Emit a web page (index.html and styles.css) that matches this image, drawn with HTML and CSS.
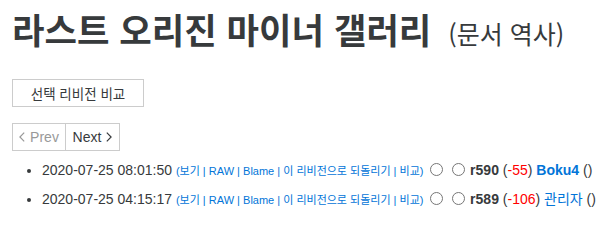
FILE: index.html
```html
<!DOCTYPE html>
<html lang="ko">
<head>
<meta charset="utf-8">
<title>라스트 오리진 마이너 갤러리 (문서 역사)</title>
<link rel="stylesheet" href="styles.css">
</head>
<body>
<div class="page">
  <h1 class="title">라스트 오리진 마이너 갤러리 <small class="sub">(문서 역사)</small></h1>
  <div class="actions">
    <button class="btn" type="button">선택 리비전 비교</button>
  </div>
  <div class="pager">
    <span class="pg disabled"><svg class="chev" width="6" height="10" viewBox="0 0 6 10"><polyline points="5.2,0.6 0.9,5 5.2,9.4" fill="none" stroke="currentColor" stroke-width="1.2"/></svg>Prev</span><a class="pg" href="#">Next<svg class="chev" width="6" height="10" viewBox="0 0 6 10"><polyline points="0.8,0.6 5.1,5 0.8,9.4" fill="none" stroke="currentColor" stroke-width="1.2"/></svg></a>
  </div>
  <ul class="history">
    <li>
      <span class="date">2020-07-25 08:01:50</span>
      <span class="tools">(<a href="#">보기</a> | <a href="#">RAW</a> | <a href="#">Blame</a> | <a href="#">이 리비전으로 되돌리기</a> | <a href="#">비교</a>)</span>
      <input class="radio" type="radio" name="oldrev">
      <input class="radio" type="radio" name="rev">
      <strong class="rev">r590</strong>
      <span class="diff">(<span class="neg">-55</span>)</span>
      <a class="user member" href="#">Boku4</a>
      <span class="note">()</span>
    </li>
    <li>
      <span class="date">2020-07-25 04:15:17</span>
      <span class="tools">(<a href="#">보기</a> | <a href="#">RAW</a> | <a href="#">Blame</a> | <a href="#">이 리비전으로 되돌리기</a> | <a href="#">비교</a>)</span>
      <input class="radio" type="radio" name="oldrev2">
      <input class="radio" type="radio" name="rev2">
      <strong class="rev">r589</strong>
      <span class="diff">(<span class="neg">-106</span>)</span>
      <a class="user" href="#">관리자</a>
      <span class="note">()</span>
    </li>
  </ul>
</div>
</body>
</html>
```

FILE: styles.css
```css
html, body {
  margin: 0;
  padding: 0;
  background: #fff;
}
body {
  font-family: "Liberation Sans", "Noto Sans CJK KR", sans-serif;
  font-size: 14px;
  color: #373a3c;
}
.page {
  padding: 0 12px;
}
.title {
  margin: 0;
  padding-top: 8px;
  height: 42px;
  font-family: "Noto Sans CJK KR", sans-serif;
  font-weight: 700;
  font-size: 35.3px;
  line-height: 42px;
  color: #373a3c;
  white-space: nowrap;
}
.sub {
  margin-left: 7px;
  font-weight: 400;
  font-size: 25px;
  line-height: 1;
  color: #373a3c;
}
.actions {
  display: flex;
  margin-top: 29px;
}
.btn {
  display: block;
  height: 28px;
  width: 132px;
  padding: 0;
  border: 1px solid #ccc;
  border-radius: 0;
  background: #fff;
  font-family: "Noto Sans CJK KR", sans-serif;
  font-size: 13.5px;
  color: #373a3c;
}
.pager {
  display: flex;
  margin-top: 16px;
}
.pg {
  display: flex;
  align-items: center;
  justify-content: center;
  gap: 5px;
  width: 52px;
  height: 26px;
  border: 1px solid #ccc;
  font-size: 14px;
  color: #373a3c;
  text-decoration: none;
}
.pg.disabled {
  color: #999;
}
.pg + .pg {
  border-left: none;
  width: 53px;
}
.chev {
  display: block;
}
.history {
  margin: 5px 0 0;
  padding-left: 30px;
}
.history li {
  line-height: 28px;
  white-space: nowrap;
}
.tools {
  font-family: "Liberation Sans", "Noto Sans CJK KR", sans-serif;
  font-size: 11px;
  color: #0275d8;
}
.tools a, .user {
  color: #0275d8;
  text-decoration: none;
}
.radio {
  width: 13px;
  height: 13px;
  margin: 0 1.5px 0 3px;
  vertical-align: -1px;
}
.rev {
  font-weight: 700;
}
.neg {
  color: #f00;
}
.user.member {
  font-weight: 700;
}
```
